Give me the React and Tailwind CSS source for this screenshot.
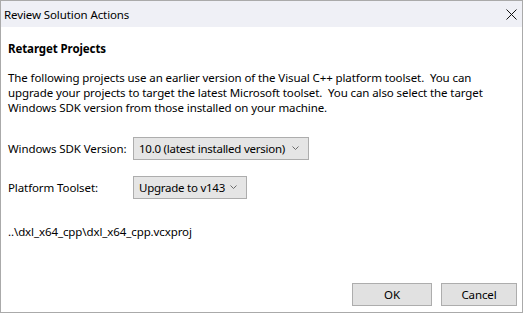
import React from "react";

function Chevron() {
  return (
    <svg width="7" height="5" viewBox="0 0 7 5" className="shrink-0">
      <path d="M0.5 0.5 L3.5 3.5 L6.5 0.5" fill="none" stroke="#6b6b6b" strokeWidth="1" />
    </svg>
  );
}

function Select({ value, width }) {
  return (
    <div
      className={`h-[23px] ${width} shrink-0 border border-[#adadad] bg-[#e5e5e5] flex items-center justify-between pl-[5px] pr-[9px] whitespace-nowrap`}
    >
      <span className="tracking-[-0.25px]">{value}</span>
      <Chevron />
    </div>
  );
}

export default function App() {
  return (
    <div className="w-[523px] h-[313px] border border-[#aaaaaa] bg-white flex flex-col text-[11.5px] tracking-[-0.1px] leading-[15px] text-black font-['Noto_Sans',sans-serif]">
      <div className="h-[26px] shrink-0 bg-[#eff0f6] flex items-center justify-between pl-[3px] pr-[4px]">
        <span className="pt-[1px]">Review Solution Actions</span>
        <svg width="11" height="11" viewBox="0 0 11 11" className="mr-[1px]">
          <path d="M0.5 0.5 L10.5 10.5 M10.5 0.5 L0.5 10.5" stroke="#111" strokeWidth="1" />
        </svg>
      </div>
      <div className="flex-1 flex flex-col px-[7px]">
        <div className="mt-[14px] font-bold">Retarget Projects</div>
        <div className="mt-[14px] whitespace-pre">
          {"The following projects use an earlier version of the Visual C++ platform toolset.  You can\nupgrade your projects to target the latest Microsoft toolset.  You can also select the target\nWindows SDK version from those installed on your machine."}
        </div>
        <div className="mt-[22px] flex items-center">
          <span className="w-[125px] shrink-0 whitespace-nowrap">Windows SDK Version:</span>
          <Select value="10.0 (latest installed version)" width="w-[176px]" />
        </div>
        <div className="mt-[16px] flex items-center">
          <span className="w-[125px] shrink-0 whitespace-nowrap">Platform Toolset:</span>
          <Select value="Upgrade to v143" width="w-[114px]" />
        </div>
        <div className="mt-[25px]">..\dxl_x64_cpp\dxl_x64_cpp.vcxproj</div>
        <div className="mt-auto mb-[6px] flex justify-end gap-[9px] mr-[-2px]">
          <button className="w-[80px] h-[23px] border border-[#adadad] bg-[#e1e1e1]">OK</button>
          <button className="w-[76px] h-[23px] border border-[#adadad] bg-[#e1e1e1]">Cancel</button>
        </div>
      </div>
    </div>
  );
}
